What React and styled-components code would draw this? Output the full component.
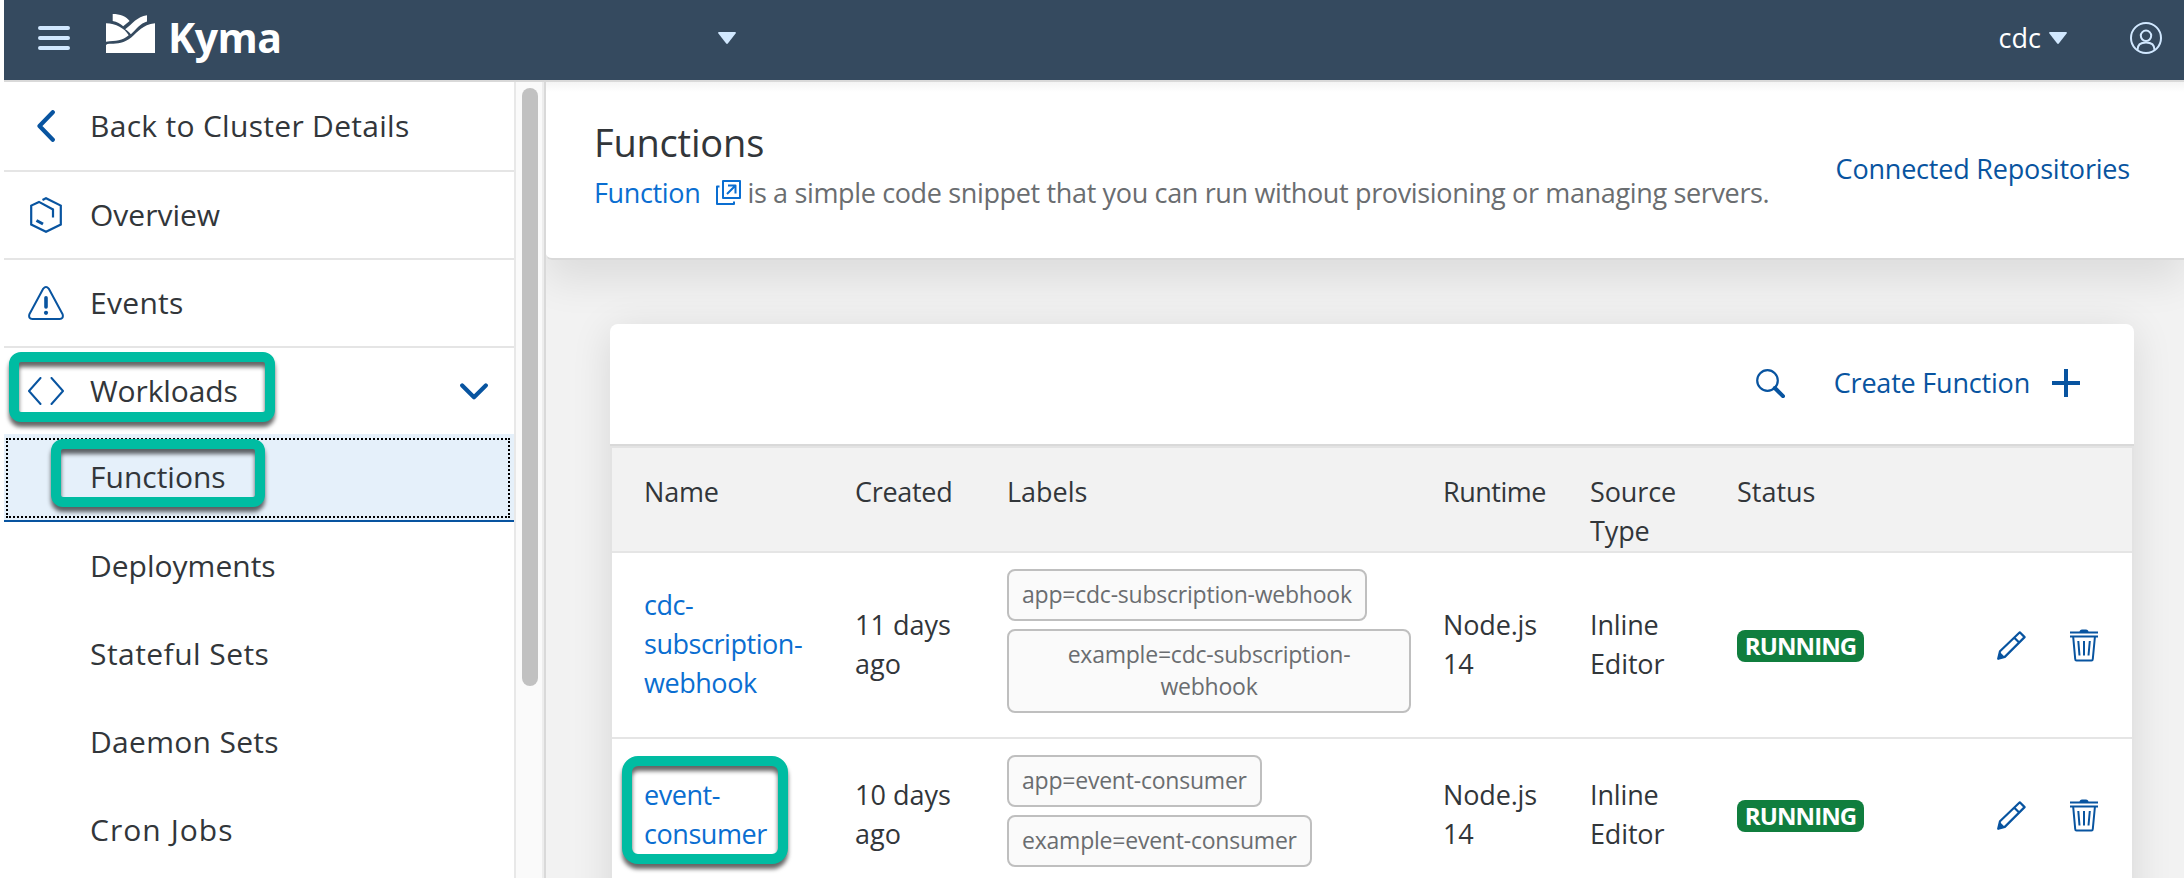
import React from 'react';
import styled, { createGlobalStyle, css } from 'styled-components';

const GlobalStyle = createGlobalStyle`
  * { box-sizing: border-box; }
  html, body { margin: 0; padding: 0; }
  body {
    width: 2184px;
    height: 878px;
    overflow: hidden;
    background: #fff;
    font-family: 'Open Sans', 'Noto Sans', sans-serif;
    color: #32363a;
  }
  svg { display: block; flex: none; }
`;

const Page = styled.div`
  display: flex;
  flex-direction: column;
  height: 878px;
  padding-left: 4px;
  overflow: hidden;
`;

/* ---------- Shell bar ---------- */

const ShellBar = styled.header`
  flex: none;
  display: flex;
  align-items: center;
  height: 82px;
  padding: 0 22px 4px 34px;
  background: #354a5f;
  border-bottom: 2px solid #d9d9d9;
`;

const Brand = styled.div`
  display: flex;
  align-items: center;
  width: 612px;
  margin-left: 36px;
`;

const BrandName = styled.span`
  margin: -3px 0 0 13px;
  font-size: 41px;
  line-height: 50px;
  font-weight: 700;
  letter-spacing: -0.5px;
  color: #fff;
`;

const Logo = styled.svg`
  margin-top: -9px;
`;

const ShellRight = styled.div`
  display: flex;
  align-items: center;
  margin-left: auto;
`;

const Namespace = styled.span`
  margin-right: 8px;
  font-size: 27px;
  line-height: 40px;
  color: #fff;
`;

const UserButton = styled.div`
  margin-left: 63px;
`;

/* ---------- Side navigation ---------- */

const Body = styled.div`
  flex: 1;
  min-height: 0;
  display: flex;
`;

const Nav = styled.nav`
  flex: none;
  width: 510px;
  overflow: hidden;
  background: #fff;
`;

const NavItem = styled.div`
  position: relative;
  display: flex;
  align-items: center;
  height: ${(p) => p.$height || 88}px;
  padding: 0 26px 0 24px;
  background: ${(p) => (p.$active ? '#e5f0fa' : '#fff')};
  border-bottom: ${(p) =>
    p.$active ? '2px solid #0854a0' : p.$divided ? '2px solid #e5e5e5' : 'none'};
  ${(p) =>
    p.$active &&
    css`
      &::before {
        content: '';
        position: absolute;
        inset: 4px 4px 2px 2px;
        border: 2px dotted #000;
      }
    `}
`;

const NavIcon = styled.span`
  display: flex;
  justify-content: center;
  width: 36px;
  margin-right: 26px;
`;

const NavLabel = styled.span`
  flex: 1;
  font-size: 30px;
  line-height: 42px;
  white-space: nowrap;
  letter-spacing: ${(p) => p.$spacing || 0}px;
`;

const Highlight = styled.span`
  position: absolute;
  z-index: 2;
  left: ${(p) => p.$left}px;
  top: ${(p) => p.$top}px;
  width: ${(p) => p.$width}px;
  height: ${(p) => p.$height}px;
  border: 10px solid #00bca2;
  border-radius: ${(p) => p.$radius || 12}px;
  filter: drop-shadow(0 5px 2px rgba(0, 0, 0, 0.6));
  pointer-events: none;
`;

const ScrollTrack = styled.div`
  flex: none;
  width: 30px;
  padding: 6px 4px 0 6px;
  background: #fafafa;
  border-left: 2px solid #e8e8e8;
  border-right: 2px solid #ededed;
`;

const ScrollThumb = styled.div`
  width: 16px;
  height: 598px;
  border-radius: 8px;
  background: #c1c1c1;
`;

/* ---------- Main area ---------- */

const Main = styled.main`
  flex: 1;
  min-width: 0;
  overflow: hidden;
  border-left: 2px solid #d9d9d9;
  background: #f2f2f2;
`;

const PageHeader = styled.section`
  display: flex;
  align-items: center;
  justify-content: space-between;
  height: 178px;
  padding: 0 54px 2px 48px;
  background: linear-gradient(#f4f4f4, #fff 10px);
  border-bottom: 2px solid #d9d9d9;
  border-bottom-left-radius: 6px;
  box-shadow: 0 20px 40px rgba(0, 0, 0, 0.09);
`;

const Heading = styled.h1`
  margin: -2px 0 0;
  font-size: 38px;
  line-height: 50px;
  font-weight: 400;
  letter-spacing: -0.2px;
`;

const Description = styled.p`
  display: flex;
  align-items: center;
  margin: 0;
  font-size: 27px;
  line-height: 52px;
  white-space: nowrap;
  letter-spacing: -0.35px;
  color: #6a6d70;
  svg { margin: -2px 6px 0 16px; }
`;

const Link = styled.a`
  color: #0a6ed1;
  text-decoration: none;
`;

const TextButton = styled.button`
  display: flex;
  align-items: center;
  padding: 0;
  border: 0;
  background: none;
  color: #0854a0;
  font: inherit;
  font-size: 27px;
  line-height: 38px;
  letter-spacing: -0.2px;
  white-space: nowrap;
`;

const Card = styled.section`
  margin: 64px 50px 0 64px;
  height: 700px;
  background: #fff;
  border-radius: 8px;
  box-shadow: 0 6px 40px rgba(0, 0, 0, 0.11);
`;

const Toolbar = styled.div`
  display: flex;
  align-items: center;
  justify-content: flex-end;
  gap: 49px;
  height: 122px;
  padding: 0 54px 2px 0;
  border-bottom: 2px solid #d9d9d9;
  button svg { margin-left: 22px; }
`;

const Table = styled.div`
  border: 2px solid #e3e3e3;
`;

const TableRow = styled.div`
  position: relative;
  display: grid;
  grid-template-columns: 211px 152px 436px 147px 147px 260px 73px 1fr;
  align-items: center;
  height: ${(p) => p.$height}px;
  padding-left: 32px;
  border-bottom: 2px solid #e5e5e5;
  font-size: 27px;
  line-height: 39px;
`;

const TableHead = styled(TableRow)`
  align-items: start;
  height: 105px;
  padding-top: 24px;
  background: #f2f2f2;
`;

const Cell = styled.div`
  padding-bottom: 3px;
  white-space: pre-line;
  letter-spacing: ${(p) => p.$spacing || 0}px;
`;

const Tags = styled.div`
  align-self: start;
  display: flex;
  flex-direction: column;
  align-items: flex-start;
  gap: 8px;
  padding-top: 16px;
`;

const Tag = styled.span`
  width: ${(p) => (p.$wrapped ? '404px' : 'auto')};
  padding: 7px 13px 9px;
  border: 2px solid #bfbfbf;
  border-radius: 8px;
  background: #fafafa;
  color: #6a6d70;
  font-size: 23px;
  line-height: 32px;
  letter-spacing: -0.22px;
  text-align: center;
  white-space: pre-line;
`;

const Badge = styled.span`
  display: block;
  width: 127px;
  height: 32px;
  margin-top: 2px;
  border-radius: 8px;
  background: #107e3e;
  color: #fff;
  font-size: 24px;
  line-height: 31px;
  font-weight: 700;
  letter-spacing: -0.9px;
  text-align: center;
`;

/* ---------- Icons ---------- */

const MenuIcon = () => (
  <svg width="32" height="24" viewBox="0 0 32 24" stroke="#d1e8ff" strokeWidth="4" strokeLinecap="round">
    <path d="M2 2h28M2 12h28M2 22h28" />
  </svg>
);

const KymaLogo = () => (
  <Logo width="49" height="39" viewBox="0 0 49 39" fill="#fff">
    <path d="M6.700 0C14 0 20.500 2.500 23.600 7L17.200 12.300C14.500 9.500 11 7.600 6.700 6.900Z" />
    <path d="M41 1.300V7.400C34 9.500 31 14.500 24.800 20.200C23.200 18.200 21.400 16.600 19.200 15.200C26 10.500 31 2.400 41 1.300Z" />
    <path d="M0 9.300C10 9.800 18.500 14 22.700 21.300C16.500 26.800 10 26.700 0 27.700Z" />
    <path d="M49 9.300C36 11 32.500 17.500 25.500 23.300C17.500 30 10 29.700 3.500 29.700Q1 29.700 0 31V39H49Z" />
  </Logo>
);

const Caret = () => (
  <svg width="18" height="12" viewBox="0 0 18 12" fill="#d1e8ff">
    <path d="M.8 0H17.200Q18.300 .3 17.600 1.500L10 11.300Q9 12.500 8 11.300L.4 1.500Q-.3 .3 .8 0Z" />
  </svg>
);

const UserIcon = () => (
  <svg width="32" height="32" viewBox="0 0 32 32" fill="none" stroke="#d1e8ff" strokeWidth="2">
    <circle cx="16" cy="16" r="15" />
    <circle cx="16" cy="13.800" r="5.200" />
    <path d="M7.500 28C7.500 23 11 20.600 16 20.600S24.500 23 24.500 28" />
  </svg>
);

const navSvg = { fill: 'none', stroke: '#0854a0', strokeLinecap: 'round', strokeLinejoin: 'round' };

const BackIcon = () => (
  <svg width="18" height="32" viewBox="0 0 18 32" {...navSvg} strokeWidth="4.200">
    <path d="M15.800 2.200L2.500 16L15.800 29.800" />
  </svg>
);

const OverviewIcon = () => (
  <svg width="32" height="36" viewBox="0 0 32 36" {...navSvg} strokeLinecap="butt" strokeLinejoin="miter" strokeWidth="2.200">
    <path d="M12.500 2.900L16 1.200L30.800 8.600V27.600L16 34.800L1.200 27.600V8.600L9 4.900L23 12.500V20.500" />
    <path d="M6.500 23.500L13 27" strokeWidth="3" />
  </svg>
);

const EventsIcon = () => (
  <svg width="36" height="34" viewBox="0 0 36 34" {...navSvg} strokeWidth="2">
    <path d="M15.300 2.600Q18 -.6 20.700 2.600L34.600 28.300Q35.800 32.800 31.600 33H4.400Q.2 32.800 1.400 28.300Z" />
    <path d="M18 11.800V21" strokeWidth="3.600" />
    <circle cx="18" cy="26.800" r="2.100" fill="#0854a0" stroke="none" />
  </svg>
);

const CodeIcon = () => (
  <svg width="36" height="28" viewBox="0 0 36 28" {...navSvg} strokeWidth="2">
    <path d="M12.500 1L1 14L12.500 27M23.500 1L35 14L23.500 27" />
  </svg>
);

const ChevronDown = () => (
  <svg width="28" height="17" viewBox="0 0 28 17" {...navSvg} strokeWidth="4.200">
    <path d="M2.200 2.500L14 14.200L25.800 2.500" />
  </svg>
);

const ExternalIcon = () => (
  <svg width="25" height="25" viewBox="0 0 25 25" fill="none" stroke="#0a6ed1" strokeWidth="2" strokeLinejoin="round">
    <rect x="7" y="1" width="17" height="17" />
    <path d="M3.500 6.500H1V24H18V21.500M11 14L19.500 5.500M12 5.500H19.500V13.500" />
  </svg>
);

const SearchIcon = () => (
  <svg width="29" height="29" viewBox="0 0 29 29" fill="none" stroke="#0854a0">
    <circle cx="11.500" cy="11.500" r="10.300" strokeWidth="2.200" />
    <path d="M18.800 19L27 27.200" strokeWidth="4" strokeLinecap="round" />
  </svg>
);

const PlusIcon = () => (
  <svg width="28" height="28" viewBox="0 0 28 28" stroke="#0854a0" strokeWidth="4">
    <path d="M14 0V28M0 14H28" />
  </svg>
);

const EditIcon = () => (
  <svg width="29" height="29" viewBox="0 0 29 29" fill="none" stroke="#0854a0" strokeWidth="2.200" strokeLinejoin="round">
    <path d="M1.200 27.800L3 20.300L22.800 1.300L27.600 6.100L7.800 25.900Z" />
    <path d="M17.300 6.700L22.100 11.500" />
    <path d="M.8 28.200L2.600 20.800L7.900 26Z" fill="#0854a0" stroke="none" />
  </svg>
);

const TrashIcon = () => (
  <svg width="29" height="33" viewBox="0 0 29 33" fill="none" stroke="#0854a0" strokeWidth="2">
    <path d="M0 3.600H28M0 7.600H28" />
    <path d="M9.500 3C9.500 1.500 10.500 .5 12 .5H16C17.500 .5 18.500 1.500 18.500 3Z" fill="#0854a0" stroke="none" />
    <path d="M3.200 8L5.200 30Q5.300 31.600 6.500 31.600H21.500Q22.700 31.600 22.800 30L24.900 8M8.300 12L9.500 26.500M14 12V26.500M19.800 12L18.500 26.500" />
  </svg>
);

/* ---------- Data ---------- */

const navItems = [
  { label: 'Back to Cluster Details', icon: <BackIcon />, divided: true, height: 90, spacing: 0.3 },
  { label: 'Overview', icon: <OverviewIcon />, divided: true },
  { label: 'Events', icon: <EventsIcon />, divided: true, spacing: 0.3 },
  {
    label: 'Workloads',
    icon: <CodeIcon />,
    height: 86,
    expanded: true,
    spacing: -0.1,
    highlight: { $left: 5, $top: 4, $width: 266, $height: 70 },
  },
  {
    label: 'Functions',
    active: true,
    highlight: { $left: 47, $top: 5, $width: 214, $height: 68 },
  },
  { label: 'Deployments' },
  { label: 'Stateful Sets', spacing: 0.45 },
  { label: 'Daemon Sets', spacing: 0.3 },
  { label: 'Cron Jobs', spacing: 1.05 },
];

const functions = [
  {
    name: 'cdc-\nsubscription-\nwebhook',
    created: '11 days\nago',
    labels: ['app=cdc-subscription-webhook', 'example=cdc-subscription-\nwebhook'],
    height: 186,
  },
  {
    name: 'event-\nconsumer',
    created: '10 days\nago',
    labels: ['app=event-consumer', 'example=event-consumer'],
    height: 154,
    highlight: { $left: 10, $top: 17, $width: 166, $height: 108, $radius: 16 },
  },
];

export default function App() {
  return (
    <Page>
      <GlobalStyle />
      <ShellBar>
        <MenuIcon />
        <Brand>
          <KymaLogo />
          <BrandName>Kyma</BrandName>
        </Brand>
        <Caret />
        <ShellRight>
          <Namespace>cdc</Namespace>
          <Caret />
          <UserButton>
            <UserIcon />
          </UserButton>
        </ShellRight>
      </ShellBar>
      <Body>
        <Nav>
          {navItems.map((item) => (
            <NavItem key={item.label} $height={item.height} $divided={item.divided} $active={item.active}>
              <NavIcon>{item.icon}</NavIcon>
              <NavLabel $spacing={item.spacing}>{item.label}</NavLabel>
              {item.expanded && <ChevronDown />}
              {item.highlight && <Highlight {...item.highlight} />}
            </NavItem>
          ))}
        </Nav>
        <ScrollTrack>
          <ScrollThumb />
        </ScrollTrack>
        <Main>
          <PageHeader>
            <div>
              <Heading>Functions</Heading>
              <Description>
                <Link>Function</Link>
                <ExternalIcon />
                is a simple code snippet that you can run without provisioning or managing servers.
              </Description>
            </div>
            <TextButton>Connected Repositories</TextButton>
          </PageHeader>
          <Card>
            <Toolbar>
              <SearchIcon />
              <TextButton>
                Create Function
                <PlusIcon />
              </TextButton>
            </Toolbar>
            <Table>
              <TableHead>
                <Cell $spacing={-0.2}>Name</Cell>
                <Cell $spacing={-0.3}>Created</Cell>
                <Cell>Labels</Cell>
                <Cell $spacing={-0.5}>Runtime</Cell>
                <Cell $spacing={-0.1}>{'Source\nType'}</Cell>
                <Cell>Status</Cell>
              </TableHead>
              {functions.map((fn) => (
                <TableRow key={fn.name} $height={fn.height}>
                  <Cell $spacing={-0.45}>
                    <Link>{fn.name}</Link>
                  </Cell>
                  <Cell>{fn.created}</Cell>
                  <Tags>
                    {fn.labels.map((label) => (
                      <Tag key={label} $wrapped={label.includes('\n')}>
                        {label}
                      </Tag>
                    ))}
                  </Tags>
                  <Cell $spacing={-0.15}>{'Node.js\n14'}</Cell>
                  <Cell $spacing={-0.15}>{'Inline\nEditor'}</Cell>
                  <Badge>RUNNING</Badge>
                  <EditIcon />
                  <TrashIcon />
                  {fn.highlight && <Highlight {...fn.highlight} />}
                </TableRow>
              ))}
            </Table>
          </Card>
        </Main>
      </Body>
    </Page>
  );
}
